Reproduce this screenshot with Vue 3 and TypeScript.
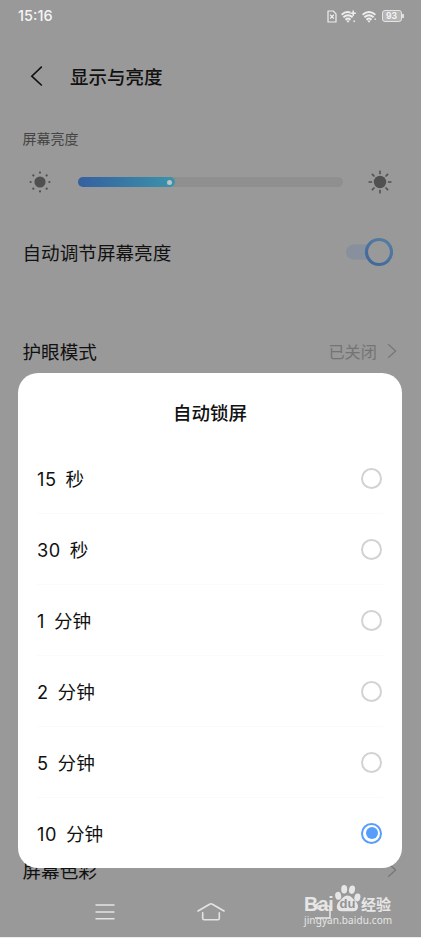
<script setup lang="ts">
import { ref } from 'vue'

interface LockOption {
  amount: string
  unit: string
}

const options: LockOption[] = [
  { amount: '15', unit: '秒' },
  { amount: '30', unit: '秒' },
  { amount: '1', unit: '分钟' },
  { amount: '2', unit: '分钟' },
  { amount: '5', unit: '分钟' },
  { amount: '10', unit: '分钟' },
]
const selected = ref<number>(5)
const rays: number[] = [0, 45, 90, 135, 180, 225, 270, 315]
</script>

<template>
  <div class="screen">
    <header class="status">
      <span class="time">15:16</span>
      <div class="indicators">
        <svg class="sim" width="10" height="13" viewBox="0 0 10 13">
          <path d="M1 1h5.2L9 3.8V12H1z" fill="none" stroke="#eee" stroke-width="1.2" stroke-linejoin="round" />
          <path d="M3.2 4.8l3.6 3.8M6.8 4.8L3.2 8.6" stroke="#eee" stroke-width="1.3" />
        </svg>
        <svg class="wifi-plus" width="16" height="13" viewBox="0 0 16 13">
          <path d="M.6 4.7Q5 .6 9.4 2.6M2.4 7.3q4.6-4 9.2 0M4.5 9.7q2.5-2.2 5 0" fill="none" stroke="#eee" stroke-width="1.9" />
          <path d="M5.2 10.4h3.6L7 12.7z" fill="#eee" />
          <path d="M12.2 .5v5.4M9.5 3.2h5.4" stroke="#eee" stroke-width="1.5" />
          <circle cx="13.2" cy="11.2" r="1" fill="#ddd" />
        </svg>
        <svg class="wifi" width="15" height="13" viewBox="0 0 15 13">
          <path d="M.6 4.7q6.4-5.2 12.8 0M2.4 7.3q4.6-4 9.2 0M4.5 9.7q2.5-2.2 5 0" fill="none" stroke="#eee" stroke-width="1.9" />
          <path d="M5.2 10.4h3.6L7 12.7z" fill="#eee" />
          <circle cx="13.2" cy="9.2" r=".9" fill="#ddd" />
        </svg>
        <div class="battery"><span class="level">93</span></div>
      </div>
    </header>

    <div class="titlebar">
      <svg width="14" height="22" viewBox="0 0 14 22">
        <path d="M11.8 1.7L1.8 11.2l10 9.3" fill="none" stroke="#111" stroke-width="1.6" />
      </svg>
      <h1>显示与亮度</h1>
    </div>

    <div class="caption">屏幕亮度</div>
    <div class="brightness">
      <svg class="sun" width="24" height="24" viewBox="-12 -12 24 24" fill="#505050">
        <circle r="5.6" />
        <circle v-for="a in rays" :key="a" cy="-9.4" r="1.1" :transform="`rotate(${a})`" />
      </svg>
      <div class="track"><div class="fill"><i class="thumb"></i></div></div>
      <svg class="sun" width="24" height="24" viewBox="-12 -12 24 24" fill="#505050">
        <circle r="6.2" />
        <rect v-for="a in rays" :key="a" x="-.8" y="-11.5" width="1.6" height="3.7" rx=".4" :transform="`rotate(${a})`" />
      </svg>
    </div>

    <div class="row auto">
      <span class="label">自动调节屏幕亮度</span>
      <svg width="48" height="30" viewBox="0 0 48 30">
        <defs>
          <linearGradient id="ring" x1="0" y1="1" x2=".6" y2="0">
            <stop offset="0" stop-color="#3d659b" />
            <stop offset="1" stop-color="#527ba2" />
          </linearGradient>
        </defs>
        <rect x="1" y="7.5" width="34" height="15" rx="7.5" fill="#87909c" />
        <circle cx="34" cy="15" r="12.5" fill="#999" stroke="url(#ring)" stroke-width="3.2" />
      </svg>
    </div>

    <div class="row eye">
      <span class="label">护眼模式</span>
      <div class="value">
        <span>已关闭</span>
        <svg width="10" height="16" viewBox="0 0 10 16"><path d="M1.2 1.2L8.6 8l-7.4 6.8" fill="none" stroke="#777" stroke-width="1.3" /></svg>
      </div>
    </div>

    <div class="row colour">
      <span class="label">屏幕色彩</span>
      <svg width="10" height="16" viewBox="0 0 10 16"><path d="M1.2 1.2L8.6 8l-7.4 6.8" fill="none" stroke="#777" stroke-width="1.3" /></svg>
    </div>

    <nav class="navbar">
      <svg width="20" height="18" viewBox="0 0 20 18"><path d="M.5 2h19M.5 9h19M.5 15.8h19" stroke="#e4e4e4" stroke-width="1.6" /></svg>
      <svg width="28" height="20" viewBox="0 0 28 20" fill="none" stroke="#e4e4e4" stroke-width="1.6" stroke-linecap="round" stroke-linejoin="round">
        <path d="M1 9L12.6 2.2q1.4-.8 2.8 0L27 9" />
        <path d="M5.7 10.8v5.5q0 1.4 1.4 1.4h13.8q1.4 0 1.4-1.4v-5.5" />
      </svg>
      <svg width="22" height="20" viewBox="0 0 22 20"><path d="M8 1L3 4l5 3M3 4h14q2 0 2 2v9q0 1-1 1H4" fill="none" stroke="#e8e8e8" stroke-width="1.5" /></svg>
    </nav>

    <section class="dialog">
      <h2>自动锁屏</h2>
      <ul>
        <li v-for="(option, i) in options" :key="i" @click="selected = i">
          <span class="amount">{{ option.amount }}</span>
          <span class="unit">{{ option.unit }}</span>
          <span class="radio" :class="{ checked: selected === i }"></span>
        </li>
      </ul>
    </section>

    <div class="watermark">
      <div class="brand">
        <span class="bai">Bai</span>
        <span class="paw">
          <svg width="28" height="29" viewBox="0 0 28 29" fill="#e6e6e6">
            <ellipse cx="4.2" cy="11.8" rx="3" ry="4" transform="rotate(-12 4.2 11.8)" />
            <ellipse cx="10.2" cy="5.2" rx="3" ry="4.2" />
            <ellipse cx="18" cy="5.7" rx="3" ry="4.2" transform="rotate(12 18 5.7)" />
            <ellipse cx="23.4" cy="13.4" rx="3" ry="4" transform="rotate(12 23.4 13.4)" />
            <path d="M13.5 11.5c3.6 0 5.4 3.4 8.2 6 3.6 3.3 3.3 9.8-2.4 9.8H7.6c-5.7 0-6-6.5-2.4-9.8 2.8-2.6 4.7-6 8.3-6z" />
          </svg>
          <b class="du">du</b>
        </span>
        <span class="jingyan">经验</span>
      </div>
      <div class="address">jingyan.baidu.com</div>
    </div>
  </div>
</template>

<style>
body {
  background: #eee;
}
</style>

<style scoped>
* {
  box-sizing: border-box;
}
svg {
  display: block;
  flex: none;
}
.screen {
  position: relative;
  display: flex;
  flex-direction: column;
  width: 421px;
  height: 937px;
  overflow: hidden;
  background: #999;
  color: #111;
  font-family: 'Noto Sans CJK SC', sans-serif;
  font-size: 18.6px;
}
.status {
  display: flex;
  justify-content: space-between;
  align-items: center;
  flex: none;
  height: 32px;
  padding: 0 18px;
}
.time {
  color: #f4f4f4;
  font: 500 14.5px/20px Inter, sans-serif;
}
.indicators {
  display: flex;
  align-items: center;
}
.wifi-plus {
  margin-left: 4px;
}
.wifi {
  margin-left: 5px;
}
.battery {
  position: relative;
  display: flex;
  align-items: center;
  justify-content: center;
  width: 20px;
  height: 12px;
  margin: 0 1.5px 0 5px;
  border: 1.5px solid #e4e4e4;
  border-radius: 3px;
  background: #b4b4b4;
}
.battery::after {
  content: '';
  position: absolute;
  right: -3px;
  top: 3px;
  width: 1.5px;
  height: 4px;
  background: #ddd;
}
.level {
  padding-top: 1px;
  color: #f4f4f4;
  font: 700 8.5px/9px Inter, sans-serif;
}
.titlebar {
  display: flex;
  align-items: center;
  flex: none;
  height: 88px;
  padding-left: 30px;
  gap: 26px;
}
h1,
h2 {
  margin: 0;
  font-size: 18.5px;
  font-weight: 500;
  line-height: 28px;
}
.caption {
  flex: none;
  height: 38px;
  padding-left: 22.5px;
  color: #444;
  font-size: 14px;
  line-height: 36px;
}
.brightness {
  display: flex;
  align-items: center;
  flex: none;
  height: 48px;
  padding: 0 29px 0 28px;
}
.track {
  width: 265px;
  height: 10px;
  margin: 0 auto 0 25.5px;
  border-radius: 5px;
  background: #8f8f8f;
}
.fill {
  display: flex;
  align-items: center;
  justify-content: flex-end;
  width: 97px;
  height: 10px;
  padding-right: 2.5px;
  border-radius: 5px;
  background: linear-gradient(90deg, #3560a0, #3b93aa);
}
.thumb {
  width: 5px;
  height: 5px;
  border-radius: 50%;
  background: #bcc4c7;
}
.row {
  display: flex;
  align-items: center;
  justify-content: space-between;
  flex: none;
  padding: 0 24px 0 22.5px;
}
.label {
  padding-bottom: 2px;
}
.auto {
  height: 92px;
  padding-right: 28px;
}
.eye {
  height: 106px;
}
.value {
  display: flex;
  align-items: center;
  gap: 10px;
  color: #747474;
  font-size: 16.2px;
}
.colour {
  height: 32px;
  margin-top: 450px;
}
.navbar {
  display: flex;
  align-items: center;
  flex: none;
  height: 51px;
  padding-left: 95px;
}
.navbar svg:nth-child(2) {
  margin-left: 81.5px;
}
.navbar svg:nth-child(3) {
  margin-left: 86.5px;
}
.dialog {
  position: absolute;
  left: 18px;
  top: 373px;
  width: 384px;
  height: 495px;
  overflow: hidden;
  padding: 25px 19px 0;
  border-radius: 20px;
  background: #fff;
}
h2 {
  text-align: center;
}
ul {
  margin: 17px 0 0;
  padding: 0;
  list-style: none;
}
li {
  display: flex;
  align-items: center;
  height: 71px;
  border-bottom: 1px solid #fafafa;
}
.amount {
  padding-top: 2px;
  font-family: Inter, sans-serif;
  font-size: 18.2px;
  letter-spacing: 0.5px;
}
.unit {
  margin-left: 9px;
  padding-bottom: 2px;
}
.radio {
  display: flex;
  align-items: center;
  justify-content: center;
  width: 21px;
  height: 21px;
  margin: 0 1px 0 auto;
  border: 2px solid #d2d2d2;
  border-radius: 50%;
}
.checked {
  border-color: #579efb;
}
.checked::after {
  content: '';
  flex: none;
  width: 12px;
  height: 12px;
  border-radius: 50%;
  background: #579efb;
}
.watermark {
  position: absolute;
  left: 304px;
  top: 884px;
  width: 92px;
  color: #e6e6e6;
}
.brand {
  display: flex;
  align-items: flex-end;
  height: 29px;
}
.bai {
  width: 30px;
  font: 700 19.5px/18px 'Liberation Sans', sans-serif;
  letter-spacing: -0.3px;
}
.paw {
  position: relative;
}
.du {
  position: absolute;
  left: 5.5px;
  top: 14px;
  color: #929292;
  font: 700 13px/12px 'Liberation Sans', sans-serif;
}
.jingyan {
  margin-left: -1px;
  font-size: 15px;
  font-weight: 700;
  line-height: 19px;
}
.address {
  padding-top: 2px;
  font: 10px/11px 'Noto Sans', sans-serif;
  letter-spacing: 0.1px;
}
</style>
